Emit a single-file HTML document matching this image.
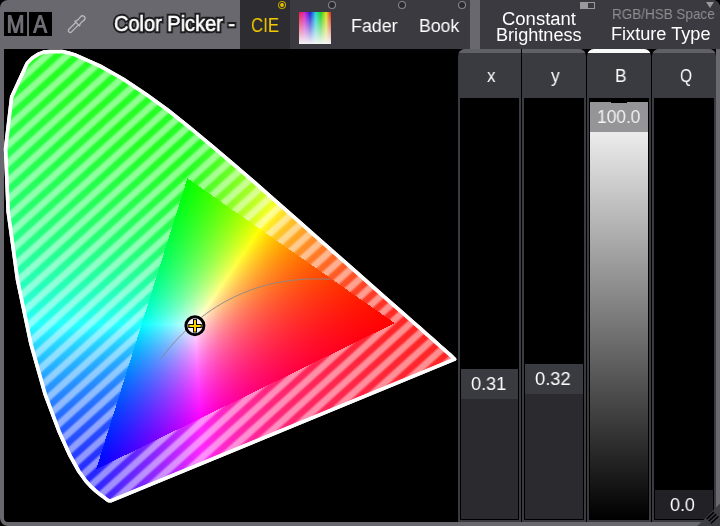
<!DOCTYPE html>
<html><head><meta charset="utf-8">
<style>
html,body{margin:0;padding:0;background:#000;}
body{width:720px;height:526px;position:relative;overflow:hidden;font-family:"Liberation Sans",sans-serif;}
.abs{position:absolute;}
.t{position:absolute;white-space:nowrap;transform-origin:0 0;color:#fff;will-change:transform;}
#frame{left:0;top:0;width:720px;height:526px;background:#68686e;border-radius:8px;}
#main{left:4px;top:49px;width:712px;height:473px;background:#000;border-radius:0 0 4px 4px;}
.ma{top:12px;width:23px;height:24px;background:#000;}
.radio{width:5px;height:5px;border:1.5px solid #1e1e22;border-radius:50%;top:1px;}
.col{top:49px;width:63px;height:473px;}
.colhead{left:0;top:0;width:63px;height:50px;background:#3a3a41;border-radius:6px 6px 0 0;overflow:hidden;}
.colband{left:0;top:0;width:63px;height:4px;background:#56565c;}
.colbody{left:0;top:50px;width:59px;height:421px;border:2px solid #3a3a41;border-top:0;background:#000;}
.inner{left:1px;width:57px;background:#2b2b30;}
.val{left:1px;width:57px;height:30px;background:#3a3a41;}
</style></head><body>
<div id="frame" class="abs"></div>
<div id="main" class="abs"></div>
<!-- header left -->
<div class="abs ma" style="left:4px;"></div>
<div class="abs ma" style="left:29px;"></div>
<svg class="abs" style="left:0;top:0" width="60" height="40" viewBox="0 0 60 40"><g fill="#6e6e74">
<path d="M7.9 33 L7.9 15 L11.2 15 L15.55 28.2 L19.9 15 L23.2 15 L23.2 33 L20.3 33 L20.3 21.3 L17.1 33 L14 33 L10.8 21.3 L10.8 33 Z"/>
<path fill-rule="evenodd" d="M32.8 33 L38.7 15 L41.7 15 L47.6 33 L44.7 33 L43.05 27.75 L37.45 27.75 L35.8 33 Z M38.3 25 L42.2 25 L40.25 18.85 Z"/>
</g></svg>
<svg class="abs" style="left:62px;top:10px" width="30" height="30" viewBox="0 0 30 30">
 <g transform="rotate(-45 14.7 14.1)" fill="none" stroke="#b8b8bc" stroke-width="1.35" stroke-linejoin="round">
  <path d="M15.45 12.25 L5.55 12.25 A1.85 1.85 0 0 0 5.55 15.95 L15.45 15.95"/>
  <path d="M15.45 10.8 Q17 12.1 19 12.0 L22.85 11.6 A2.5 2.5 0 0 1 22.85 16.6 L19 16.2 Q17 16.1 15.45 17.4 Z"/>
 </g>
</svg>
<div class="t" style="left:114.2px;top:13.4px;font-size:22.17px;line-height:22.17px;transform:scaleX(0.902);color:#1c1c1e;-webkit-text-stroke:4.6px #1c1c1e;">Color Picker -</div>
<div class="t" style="left:114.2px;top:13.4px;font-size:22.17px;line-height:22.17px;transform:scaleX(0.902);-webkit-text-stroke:0.6px #fff;">Color Picker -</div>
<!-- tabs -->
<div class="abs" style="left:240px;top:0;width:230px;height:49px;background:#3a3a40;"></div>
<div class="abs" style="left:240px;top:0;width:50px;height:49px;background:#2c2c31;"></div>
<div class="t" style="left:250.86px;top:16.49px;font-size:19.42px;line-height:19.42px;transform:scaleX(0.866);color:#f2c800;">CIE</div>
<div class="abs" style="left:299px;top:12px;width:32px;height:32px;background:linear-gradient(to bottom,rgba(242,242,242,0) 0%,rgba(242,242,242,0.45) 45%,rgba(245,245,245,1) 100%),linear-gradient(to right,#e82030 0%,#d820d0 17%,#2020d8 35%,#20d8e0 52%,#20d020 68%,#e0e020 85%,#e02020 100%);"></div>
<div class="t" style="left:351.37px;top:17.11px;font-size:18.7px;line-height:18.7px;transform:scaleX(0.955);">Fader</div>
<div class="t" style="left:419.49px;top:16.91px;font-size:18.7px;line-height:18.7px;transform:scaleX(0.946);">Book</div>
<svg class="abs" style="left:240px;top:0" width="230" height="12">
<circle cx="42" cy="5" r="3.5" fill="#29292e" stroke="#c4a400" stroke-width="1.1"/><circle cx="42" cy="5" r="1.9" fill="#e8c200"/>
<circle cx="92" cy="5" r="3.5" fill="#29292e" stroke="#84848a" stroke-width="1.1"/>
<circle cx="162" cy="5" r="3.5" fill="#29292e" stroke="#84848a" stroke-width="1.1"/>
<circle cx="222" cy="5" r="3.5" fill="#29292e" stroke="#84848a" stroke-width="1.1"/>
</svg>
<div class="abs" style="left:470px;top:0;width:10px;height:49px;background:#68686e;"></div>
<div class="abs" style="left:480px;top:0;width:240px;height:49px;background:#3a3a40;border-radius:0 8px 0 0;"></div>
<div class="t" style="left:502.39px;top:10.60px;font-size:17.6px;line-height:17.6px;transform:scaleX(1.05);">Constant</div>
<div class="t" style="left:496.05px;top:27.05px;font-size:17.6px;line-height:17.6px;transform:scaleX(1.03);">Brightness</div>
<div class="abs" style="left:580px;top:2px;width:13px;height:5px;border:1px solid #9a9a9e;"><div class="abs" style="left:0;top:0;width:7px;height:5px;background:#9a9a9e;"></div></div>
<div class="t" style="left:611.62px;top:7.03px;font-size:14.2px;line-height:14.2px;transform:scaleX(0.95);color:#8e8e92;">RGB/HSB Space</div>
<div class="t" style="left:611.25px;top:26.17px;font-size:17.68px;line-height:17.68px;transform:scaleX(1.027);">Fixture Type</div>
<div class="abs" style="left:706px;top:2px;width:0;height:0;border-left:4.5px solid transparent;border-right:4.5px solid transparent;border-top:6px solid #9a9a9e;"></div>

<!-- fader columns -->
<div class="abs" style="left:458px;top:49px;width:63px;height:50px;background:#3a3a41;border-radius:7px 0 0 0;overflow:hidden;"><div class="abs" style="left:0;top:0;width:63px;height:4px;background:#606066;"></div></div>
<div class="abs" style="left:522px;top:49px;width:64px;height:50px;background:#3a3a41;border-radius:0 7px 0 0;overflow:hidden;"><div class="abs" style="left:0;top:0;width:64px;height:4px;background:#606066;"></div></div>
<div class="abs" style="left:587px;top:49px;width:64px;height:50px;background:#3a3a41;border-radius:7px 7px 0 0;overflow:hidden;"><div class="abs" style="left:0;top:0;width:64px;height:4px;background:#fafafa;"></div></div>
<div class="abs" style="left:652px;top:49px;width:64px;height:50px;background:#3a3a41;border-radius:7px 7px 0 0;overflow:hidden;"><div class="abs" style="left:0;top:0;width:64px;height:4px;background:#606066;"></div></div>
<div class="abs" style="left:458px;top:98px;width:59px;height:421.5px;border:2px solid #3a3a41;border-top:0;background:#000;"></div>
<div class="abs" style="left:522px;top:98px;width:60px;height:421.5px;border:2px solid #3a3a41;border-top:0;background:#000;"></div>
<div class="abs" style="left:587px;top:98px;width:60px;height:421.5px;border:2px solid #3a3a41;border-top:0;background:#000;"></div>
<div class="abs" style="left:652px;top:98px;width:60px;height:421.5px;border:2px solid #3a3a41;border-top:0;background:#000;"></div>
<div class="abs" style="left:461px;top:369px;width:57px;height:30px;background:#3a3a41;"></div>
<div class="abs" style="left:461px;top:399px;width:57px;height:120px;background:#2a2a2f;"></div>
<div class="abs" style="left:525px;top:364px;width:58px;height:30px;background:#3a3a41;"></div>
<div class="abs" style="left:525px;top:394px;width:58px;height:125px;background:#2a2a2f;"></div>
<div class="abs" style="left:590px;top:102px;width:58px;height:29.5px;background:#959598;"></div>
<div class="abs" style="left:611px;top:102px;width:16px;height:1px;background:#000;"></div>
<div class="abs" style="left:590px;top:131.5px;width:58px;height:387.5px;background:linear-gradient(#ececec,#000);"></div>
<div class="abs" style="left:655px;top:490px;width:58px;height:29px;background:#222226;"></div>
<svg class="abs" style="left:690px;top:495px" width="30" height="31" viewBox="0 0 30 31">
<polygon points="7.4,31 30,8.4 30,31" fill="#3c3c43"/>
<g stroke="#000" stroke-width="1.5" stroke-linecap="round"><path d="M17.2 23.6 L23.6 17.4 M19.2 25.8 L25.8 19.6 M21.4 28 L28 21.8"/></g>
</svg>
<div class="t" style="left:487.13px;top:66.78px;font-size:18.85px;line-height:18.85px;transform:scaleX(0.906);">x</div>
<div class="t" style="left:551px;top:66.78px;font-size:18.85px;line-height:18.85px;transform:scaleX(0.92);">y</div>
<div class="t" style="left:614.81px;top:66.96px;font-size:18.41px;line-height:18.41px;transform:scaleX(0.943);">B</div>
<div class="t" style="left:679.8px;top:66.96px;font-size:18.41px;line-height:18.41px;transform:scaleX(0.84);">Q</div>
<div class="t" style="left:470.98px;top:375.11px;font-size:18.7px;line-height:18.7px;transform:scaleX(0.969);">0.31</div>
<div class="t" style="left:535.05px;top:369.96px;font-size:18.7px;line-height:18.7px;transform:scaleX(0.98);">0.32</div>
<div class="t" style="left:596.61px;top:108.21px;font-size:18.7px;line-height:18.7px;transform:scaleX(0.928);color:#f4f4f4;">100.0</div>
<div class="t" style="left:669.98px;top:496.21px;font-size:18.7px;line-height:18.7px;transform:scaleX(0.96);">0.0</div>

<!-- static fallback (covered by canvas when scripting is available) -->
<div class="abs" style="left:0;top:0;width:460px;height:526px;clip-path:path('M110.8 499.1 L109.9 499.2 L109.1 499.1 L108.5 498.7 L107.6 498.1 L106.4 497.2 L104.9 495.9 L102.9 494.4 L100.1 492.3 L96.7 489.6 L92.5 485.8 L87.3 480.3 L80.3 470.6 L71.5 455.0 L60.4 430.3 L46.6 393.6 L32.4 342.8 L19.1 279.3 L9.8 211.5 L7.2 148.8 L13.3 97.4 L28.5 64.1 L33.4 59.3 L38.7 55.9 L44.3 53.6 L50.0 52.3 L55.9 52.0 L62.0 52.9 L68.1 54.5 L74.3 56.4 L99.0 67.3 L122.2 80.4 L144.6 95.2 L166.6 111.3 L188.4 128.6 L210.1 146.6 L231.9 165.1 L253.6 183.9 L275.1 202.8 L296.2 221.4 L316.8 239.5 L336.4 256.8 L354.9 273.1 L371.8 288.0 L386.5 301.0 L399.4 312.4 L410.1 321.7 L418.8 329.4 L425.7 335.6 L431.3 340.4 L435.7 344.4 L439.4 347.7 L442.5 350.4 L444.9 352.5 L446.7 354.1 L449.2 356.2 L450.4 357.3 L451.2 358.1 L452.0 358.8 Z');background:repeating-linear-gradient(137.4deg,rgba(255,255,255,0.56) 0px,rgba(255,255,255,0.56) 4.5px,rgba(255,255,255,0.15) 7.5px,rgba(255,255,255,0.15) 10.5px,rgba(255,255,255,0.56) 13.55px),conic-gradient(from 0deg at 195px 325.7px,rgb(0,255,0) 0deg,rgb(62,255,0) 10deg,rgb(132,255,0) 20deg,rgb(215,255,0) 30deg,rgb(255,203,0) 40deg,rgb(255,138,0) 50deg,rgb(255,91,0) 60deg,rgb(255,52,0) 70deg,rgb(255,19,0) 80deg,rgb(255,0,0) 90deg,rgb(255,0,19) 100deg,rgb(255,0,44) 110deg,rgb(255,0,67) 120deg,rgb(255,0,90) 130deg,rgb(255,0,114) 140deg,rgb(255,0,140) 150deg,rgb(255,0,172) 160deg,rgb(255,0,215) 170deg,rgb(234,0,255) 180deg,rgb(166,0,255) 190deg,rgb(96,0,255) 200deg,rgb(18,0,255) 210deg,rgb(0,21,255) 220deg,rgb(0,83,255) 230deg,rgb(0,132,255) 240deg,rgb(0,174,255) 250deg,rgb(0,213,255) 260deg,rgb(0,251,255) 270deg,rgb(0,255,223) 280deg,rgb(0,255,194) 290deg,rgb(0,255,167) 300deg,rgb(0,255,142) 310deg,rgb(0,255,116) 320deg,rgb(0,255,89) 330deg,rgb(0,255,56) 340deg,rgb(0,255,16) 350deg,rgb(0,255,0) 360deg);"></div>
<div class="abs" style="left:0;top:0;width:460px;height:526px;clip-path:polygon(187.4px 178.3px,394.7px 323.1px,96.1px 469.4px);background:radial-gradient(circle at 195px 325.7px,#fff 0px,rgba(255,255,255,0.75) 18px,rgba(255,255,255,0.25) 60px,rgba(255,255,255,0) 110px),conic-gradient(from 0deg at 195px 325.7px,rgb(20,255,2) 0deg,rgb(81,255,2) 10deg,rgb(146,255,2) 20deg,rgb(221,255,3) 30deg,rgb(255,208,2) 40deg,rgb(255,149,2) 50deg,rgb(255,104,2) 60deg,rgb(255,66,1) 70deg,rgb(255,32,1) 80deg,rgb(255,1,3) 90deg,rgb(255,2,33) 100deg,rgb(255,2,58) 110deg,rgb(255,2,81) 120deg,rgb(255,2,103) 130deg,rgb(255,2,126) 140deg,rgb(255,3,152) 150deg,rgb(255,3,182) 160deg,rgb(255,3,220) 170deg,rgb(236,3,255) 180deg,rgb(177,3,255) 190deg,rgb(113,3,255) 200deg,rgb(40,2,255) 210deg,rgb(2,45,255) 220deg,rgb(3,103,255) 230deg,rgb(3,148,255) 240deg,rgb(3,186,255) 250deg,rgb(4,219,255) 260deg,rgb(4,251,255) 270deg,rgb(4,255,229) 280deg,rgb(4,255,204) 290deg,rgb(3,255,181) 300deg,rgb(3,255,158) 310deg,rgb(3,255,135) 320deg,rgb(3,255,109) 330deg,rgb(3,255,79) 340deg,rgb(2,255,39) 350deg,rgb(20,255,2) 360deg);"></div>
<svg class="abs" style="left:0;top:0" width="460" height="526">
<path d="M111.2 500.7 L109.9 500.8 L108.5 500.6 L107.6 500.0 L106.7 499.4 L105.4 498.4 L103.9 497.1 L101.9 495.7 L99.1 493.6 L95.7 490.8 L91.4 486.9 L86.1 481.3 L79.0 471.5 L70.1 455.7 L58.9 430.9 L45.1 394.1 L30.8 343.2 L17.5 279.6 L8.2 211.6 L5.6 148.7 L11.7 97.0 L27.2 63.2 L32.4 58.0 L37.9 54.4 L43.8 52.1 L49.8 51.6 L56.0 51.6 L62.3 51.6 L68.6 53.0 L74.9 54.9 L99.7 65.9 L123.0 79.0 L145.5 93.9 L167.6 110.0 L189.4 127.4 L211.1 145.4 L232.9 163.9 L254.7 182.7 L276.2 201.6 L297.3 220.2 L317.9 238.3 L337.5 255.6 L356.0 271.9 L372.9 286.8 L387.6 299.8 L400.5 311.2 L411.2 320.5 L419.9 328.2 L426.8 334.4 L432.4 339.2 L436.8 343.2 L440.5 346.5 L443.6 349.2 L446.0 351.3 L447.7 352.9 L450.3 355.0 L451.5 356.1 L452.3 356.9 L454.6 359.2 Z" fill="none" stroke="#fff" stroke-width="3.6" stroke-linejoin="round"/>
<path d="M161 358.5 C205 300 265 275 330.5 279.4" fill="none" stroke="rgba(135,135,135,0.9)" stroke-width="1"/>
<circle cx="194.9" cy="325.7" r="9" fill="#f6f0f6" stroke="#000" stroke-width="3"/>
<rect x="188.3" y="324" width="13.4" height="4" fill="#000"/><rect x="193" y="319.1" width="4" height="13.4" fill="#000"/>
<rect x="189.3" y="325" width="11.4" height="2" fill="#ffd400"/><rect x="194" y="320.1" width="2" height="11.4" fill="#ffd400"/>
</svg>
<canvas id="c" class="abs" width="460" height="526" style="left:0;top:0;"></canvas>
<script>
(function(){
var W=460,H=526;var SPX=20,SPY=18.06,SPH=0.43,SW1=0.15,SW2=0.35,SLO=0.15,SHI=0.56;
var cv=document.getElementById('c');var ctx=cv.getContext('2d');
var loc="110.8,499.1 109.9,499.2 109.1,499.1 108.5,498.7 107.6,498.1 106.4,497.2 104.9,495.9 102.9,494.4 100.1,492.3 96.7,489.6 92.5,485.8 87.3,480.3 80.3,470.6 71.5,455.0 60.4,430.3 46.6,393.6 32.4,342.8 19.1,279.3 9.8,211.5 7.2,148.8 13.3,97.4 28.5,64.1 33.4,59.3 38.7,55.9 44.3,53.6 50.0,52.3 55.9,52.0 62.0,52.9 68.1,54.5 74.3,56.4 99.0,67.3 122.2,80.4 144.6,95.2 166.6,111.3 188.4,128.6 210.1,146.6 231.9,165.1 253.6,183.9 275.1,202.8 296.2,221.4 316.8,239.5 336.4,256.8 354.9,273.1 371.8,288.0 386.5,301.0 399.4,312.4 410.1,321.7 418.8,329.4 425.7,335.6 431.3,340.4 435.7,344.4 439.4,347.7 442.5,350.4 444.9,352.5 446.7,354.1 449.2,356.2 450.4,357.3 451.2,358.1 452.0,358.8".split(' ').map(function(s){return s.split(',').map(Number);});
var off=document.createElement('canvas');off.width=W;off.height=H;
var oc=off.getContext('2d');var img=oc.createImageData(W,H);var d=img.data;
var Gx=187.4,Gy=178.3,Rx=394.7,Ry=323.1,Bx=96.1,By=469.4;
function g(v){v=Math.max(0,Math.min(1,v));return v<=0.0031308?12.92*v:1.055*Math.pow(v,1/2.4)-0.055;}
function side(ax,ay,bx,by,px,py){return (bx-ax)*(py-ay)-(by-ay)*(px-ax);}
var sG=side(Bx,By,Rx,Ry,Gx,Gy),sR=side(Gx,Gy,Bx,By,Rx,Ry),sB=side(Rx,Ry,Gx,Gy,Bx,By);
for(var py=40;py<H;py++){for(var px=0;px<W;px++){
  var X=px+0.5,Y=py+0.5;
  var x=(X-4.8)/608.7,y=(501.8-Y)/539.1; if(y<0.002)y=0.002;
  var XX=x/y,ZZ=(1-x-y)/y;
  var r=3.2406*XX-1.5372-0.4986*ZZ, gg=-0.9689*XX+1.8758+0.0415*ZZ, b=0.0557*XX-0.2040+1.0570*ZZ;
  var inside = side(Bx,By,Rx,Ry,X,Y)*sG>=0 && side(Gx,Gy,Bx,By,X,Y)*sR>=0 && side(Rx,Ry,Gx,Gy,X,Y)*sB>=0;
  if(r<0)r=0;if(gg<0)gg=0;if(b<0)b=0;
  var m=Math.max(r,gg,b); if(m<=0)m=1; r/=m;gg/=m;b/=m;
  var R=r*255,G=gg*255,B=b*255;
  if(!inside){
    var t=X/SPX+Y/SPY-SPH; t=t-Math.floor(t); var dd=Math.abs(t-0.5); dd=0.5-dd;
    var f=(dd<SW1)?1:(dd>SW2?0:(SW2-dd)/(SW2-SW1));
    var a=SLO+(SHI-SLO)*f;R=R+(255-R)*a;G=G+(255-G)*a;B=B+(255-B)*a;
  }
  var i=(py*W+px)*4;d[i]=R;d[i+1]=G;d[i+2]=B;d[i+3]=255;
}}
oc.putImageData(img,0,0);
ctx.save();ctx.beginPath();ctx.moveTo(loc[0][0],loc[0][1]);
for(var k=1;k<loc.length;k++)ctx.lineTo(loc[k][0],loc[k][1]);
ctx.closePath();ctx.clip();ctx.drawImage(off,0,0);ctx.restore();
var lo2="111.2,500.7 109.9,500.8 108.5,500.6 107.6,500.0 106.7,499.4 105.4,498.4 103.9,497.1 101.9,495.7 99.1,493.6 95.7,490.8 91.4,486.9 86.1,481.3 79.0,471.5 70.1,455.7 58.9,430.9 45.1,394.1 30.8,343.2 17.5,279.6 8.2,211.6 5.6,148.7 11.7,97.0 27.2,63.2 32.4,58.0 37.9,54.4 43.8,52.1 49.8,51.6 56.0,51.6 62.3,51.6 68.6,53.0 74.9,54.9 99.7,65.9 123.0,79.0 145.5,93.9 167.6,110.0 189.4,127.4 211.1,145.4 232.9,163.9 254.7,182.7 276.2,201.6 297.3,220.2 317.9,238.3 337.5,255.6 356.0,271.9 372.9,286.8 387.6,299.8 400.5,311.2 411.2,320.5 419.9,328.2 426.8,334.4 432.4,339.2 436.8,343.2 440.5,346.5 443.6,349.2 446.0,351.3 447.7,352.9 450.3,355.0 451.5,356.1 452.3,356.9 454.6,359.2".split(' ').map(function(s){return s.split(',').map(Number);});
ctx.beginPath();ctx.moveTo(lo2[0][0],lo2[0][1]);
for(var k=1;k<lo2.length;k++)ctx.lineTo(lo2[k][0],lo2[k][1]);
ctx.closePath();ctx.strokeStyle='#fff';ctx.lineWidth=3.6;ctx.lineJoin='round';ctx.stroke();
// planckian
ctx.beginPath();ctx.moveTo(161,358.5);ctx.bezierCurveTo(205,300,265,275,330.5,279.4);
ctx.strokeStyle='rgba(135,135,135,0.9)';ctx.lineWidth=1;ctx.stroke();
// cursor
ctx.beginPath();ctx.arc(194.9,325.7,9,0,Math.PI*2);ctx.fillStyle='#f6f0f6';ctx.fill();
ctx.lineWidth=3;ctx.strokeStyle='#000';ctx.stroke();
ctx.fillStyle='#000';ctx.fillRect(188.3,324,13.4,4);ctx.fillRect(193,319.1,4,13.4);
ctx.fillStyle='#ffd400';ctx.fillRect(189.3,325,11.4,2);ctx.fillRect(194,320.1,2,11.4);
})();
</script>
</body></html>
